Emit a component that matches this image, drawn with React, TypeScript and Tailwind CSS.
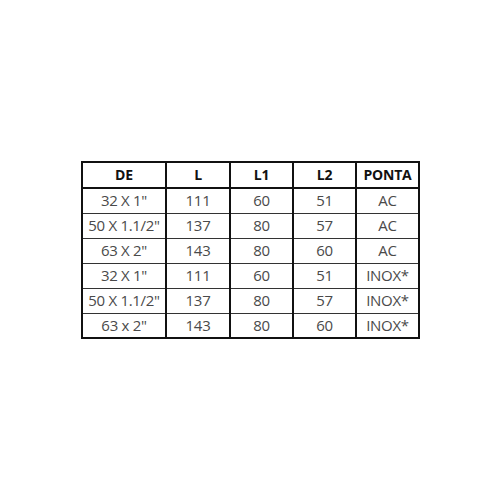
import React from "react";

const rows = [
  ["32 X 1\"", "111", "60", "51", "AC"],
  ["50 X 1.1/2\"", "137", "80", "57", "AC"],
  ["63 X 2\"", "143", "80", "60", "AC"],
  ["32 X 1\"", "111", "60", "51", "INOX*"],
  ["50 X 1.1/2\"", "137", "80", "57", "INOX*"],
  ["63 x 2\"", "143", "80", "60", "INOX*"],
];

const widths = ["w-[84px]", "w-[64px]", "w-[63px]", "w-[63px]", "w-[63px]"];

export default function App() {
  return (
    <div className="w-[500px] h-[500px] bg-white pt-[161px] pl-[81px]" style={{ fontFamily: '"Open Sans", sans-serif' }}>
      <table className="border-collapse border-2 border-[#111] table-fixed">
        <thead>
          <tr className="h-[26px]">
            {["DE", "L", "L1", "L2", "PONTA"].map((h, i) => (
              <th
                key={i}
                className={`${widths[i]} border-2 border-[#111] p-0 text-center text-[14px] font-bold text-[#111] leading-none tracking-[-0.2px]`}
              >
                {h}
              </th>
            ))}
          </tr>
        </thead>
        <tbody>
          {rows.map((r, ri) => (
            <tr key={ri} className="h-[25px]">
              {r.map((c, ci) => (
                <td
                  key={ci}
                  className={`${widths[ci]} border-x-2 border-y border-x-[#111] border-y-[#333] p-0 text-center text-[15px] text-[#4a4a4a] leading-none whitespace-nowrap tracking-[-0.3px]`}
                >
                  {c}
                </td>
              ))}
            </tr>
          ))}
        </tbody>
      </table>
    </div>
  );
}
